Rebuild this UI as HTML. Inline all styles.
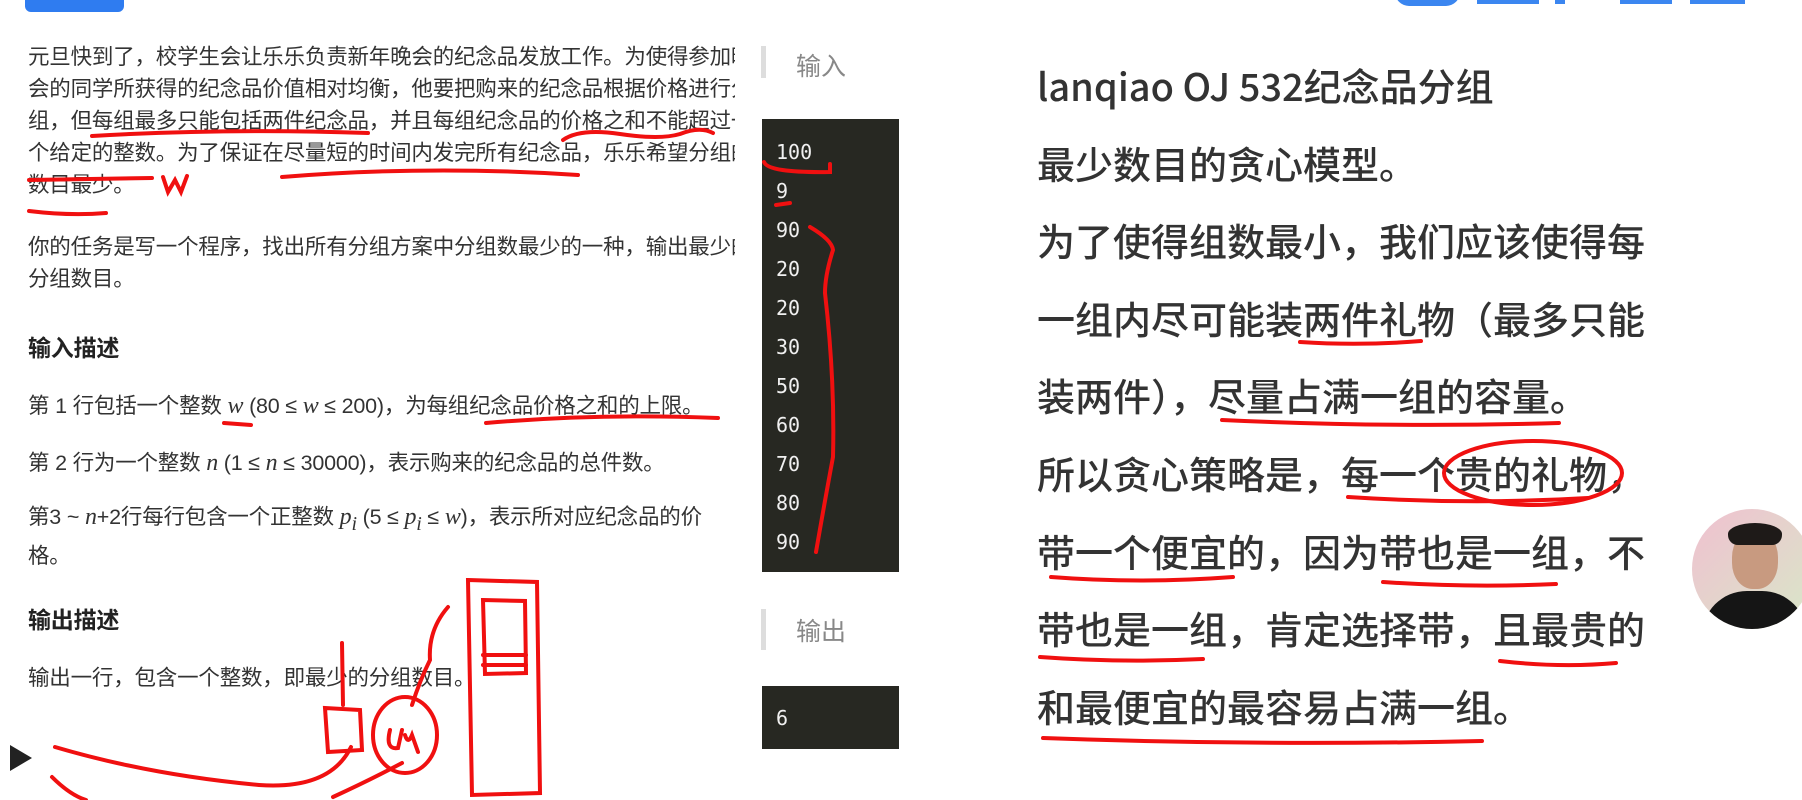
<!DOCTYPE html>
<html><head><meta charset="utf-8"><style>
body{margin:0;width:1802px;height:800px;overflow:hidden;background:#fff;position:relative;font-family:"Liberation Sans","Noto Sans CJK SC",sans-serif}
.a{position:absolute;white-space:nowrap}
.lt{position:absolute;left:28px;width:707px;overflow:hidden;font-size:21.5px;color:#333;line-height:32px;white-space:nowrap;letter-spacing:-0.2px}
.h{font-weight:bold;font-size:23px;color:#222}
.bar{position:absolute;left:761px;width:5px;background:#ddd}
.lab{position:absolute;left:796px;font-size:25px;color:#888}
.box{position:absolute;left:762px;width:137px;background:#272822}
.num{position:absolute;left:776px;font-family:"DejaVu Sans Mono","Liberation Mono",monospace;font-size:20px;color:#f0f0f0}
.rt{position:absolute;left:1037px;font-family:"Noto Sans CJK SC",sans-serif;font-size:38px;color:#333;font-weight:500;line-height:77.6px;white-space:nowrap}
i{font-family:"Liberation Serif",serif;font-size:24px}
</style></head><body>
<div class="a" style="left:25px;top:-8px;width:99px;height:20px;background:#2f7cf0;border-radius:6px"></div>
<div class="a" style="left:1395px;top:-8px;width:65px;height:14px;background:#3b86f0;border-radius:0 0 20px 20px"></div>
<div class="a" style="left:1477px;top:0;width:62px;height:4px;background:#3b86f0"></div>
<div class="a" style="left:1555px;top:0;width:10px;height:4px;background:#3b86f0"></div>
<div class="a" style="left:1620px;top:0;width:52px;height:4px;background:#3b86f0"></div>
<div class="a" style="left:1690px;top:0;width:55px;height:4px;background:#3b86f0"></div>

<div class="lt" style="top:41px">元旦快到了，校学生会让乐乐负责新年晚会的纪念品发放工作。为使得参加晚<br>会的同学所获得的纪念品价值相对均衡，他要把购来的纪念品根据价格进行分<br>组，但每组最多只能包括两件纪念品，并且每组纪念品的价格之和不能超过一<br>个给定的整数。为了保证在尽量短的时间内发完所有纪念品，乐乐希望分组的<br>数目最少。</div>
<div class="lt" style="top:231px">你的任务是写一个程序，找出所有分组方案中分组数最少的一种，输出最少的<br>分组数目。</div>
<div class="lt h" style="top:332px">输入描述</div>
<div class="lt" style="top:390px">第 1 行包括一个整数 <i>w</i> (80 ≤ <i>w</i> ≤ 200)，为每组纪念品价格之和的上限。</div>
<div class="lt" style="top:447px">第 2 行为一个整数 <i>n</i> (1 ≤ <i>n</i> ≤ 30000)，表示购来的纪念品的总件数。</div>
<div class="lt" style="top:501px">第3 ~ <i>n</i>+2行每行包含一个正整数 <i>p<sub>i</sub></i> (5 ≤ <i>p<sub>i</sub></i> ≤ <i>w</i>)，表示所对应纪念品的价<br>格。</div>
<div class="lt h" style="top:604px">输出描述</div>
<div class="lt" style="top:662px">输出一行，包含一个整数，即最少的分组数目。</div>

<div class="bar" style="top:46px;height:32px"></div>
<div class="lab" style="top:47px">输入</div>
<div class="box" style="top:119px;height:453px"></div>
<div class="num" style="top:140px">100</div>
<div class="num" style="top:179px">9</div>
<div class="num" style="top:218px">90</div>
<div class="num" style="top:257px">20</div>
<div class="num" style="top:296px">20</div>
<div class="num" style="top:335px">30</div>
<div class="num" style="top:374px">50</div>
<div class="num" style="top:413px">60</div>
<div class="num" style="top:452px">70</div>
<div class="num" style="top:491px">80</div>
<div class="num" style="top:530px">90</div>
<div class="bar" style="top:609px;height:41px"></div>
<div class="lab" style="top:612px">输出</div>
<div class="box" style="top:686px;height:63px"></div>
<div class="num" style="top:706px">6</div>

<div class="rt" style="top:46px">lanqiao OJ 532纪念品分组<br>最少数目的贪心模型。<br>为了使得组数最小，我们应该使得每<br>一组内尽可能装两件礼物（最多只能<br>装两件），尽量占满一组的容量。<br>所以贪心策略是，每一个贵的礼物，<br>带一个便宜的，因为带也是一组，不<br>带也是一组，肯定选择带，且最贵的<br>和最便宜的最容易占满一组。</div>

<div class="a" style="left:1692px;top:509px;width:120px;height:120px;border-radius:50%;background:linear-gradient(135deg,#f0c0d0,#d8e8c8);overflow:hidden">
<div style="position:absolute;left:40px;top:22px;width:46px;height:58px;border-radius:45%;background:#c89a80"></div>
<div style="position:absolute;left:36px;top:14px;width:54px;height:22px;border-radius:50% 50% 10px 10px;background:#1e1a18"></div>
<div style="position:absolute;left:10px;top:82px;width:105px;height:50px;background:#151515;border-radius:45px 45px 0 0"></div></div>
<div class="a" style="left:10px;top:745px;width:0;height:0;border-left:22px solid #222;border-top:13px solid transparent;border-bottom:13px solid transparent"></div>

<svg class="a" style="left:0;top:0" width="1802" height="800" fill="none" stroke="#f01010" stroke-width="4" stroke-linecap="round">
<path d="M92 136 Q230 128 368 133"/><path d="M563 140 Q580 128 620 134 Q660 140 680 134 Q700 126 713 133"/>
<path d="M29 180 L152 178"/><path d="M163 177 L168 192 L175 180 L181 192 L187 176"/>
<path d="M29 211 Q70 216 106 213"/><path d="M282 177 Q430 165 578 175"/>
<path d="M764 162 Q768 173 830 172 L830 164"/><path d="M776 205 L790 203"/>
<path d="M810 227 Q832 240 833 250 Q825 275 825 293 Q835 380 833 457 Q825 500 816 552"/>
<path d="M224 423 L251 425"/><path d="M486 423 Q600 413 718 418"/>
<path d="M468 580 L537 582 L540 793 L472 795 Z"/><path d="M483 600 L525 601 L526 673 L485 674 Z"/><path d="M483 655 L526 655 M483 665 L526 665"/>
<path d="M448 607 Q428 630 430 660 Q420 680 412 705"/>
<path d="M342 643 L343 705"/><path d="M325 708 L360 710 L362 750 L328 752 Z"/>
<ellipse cx="405" cy="735" rx="32" ry="38"/><path d="M390 730 Q385 750 398 748 L402 730 M405 735 Q408 745 412 735 L418 752"/>
<path d="M55 747 Q150 775 259 785 Q330 790 351 747"/><path d="M52 777 Q70 795 86 800"/><path d="M333 797 Q370 780 402 763"/>
<path d="M1300 342 Q1360 346 1421 341"/><path d="M1222 420 Q1390 428 1559 423"/>
<path d="M1348 497 Q1470 505 1588 498"/><ellipse cx="1533" cy="473" rx="89" ry="32"/>
<path d="M1051 577 Q1140 584 1233 577"/><path d="M1383 582 Q1470 588 1556 584"/>
<path d="M1040 657 Q1120 663 1203 659"/><path d="M1500 661 Q1560 668 1616 663"/>
<path d="M1043 738 Q1260 746 1482 741"/>
</svg>
</body></html>
